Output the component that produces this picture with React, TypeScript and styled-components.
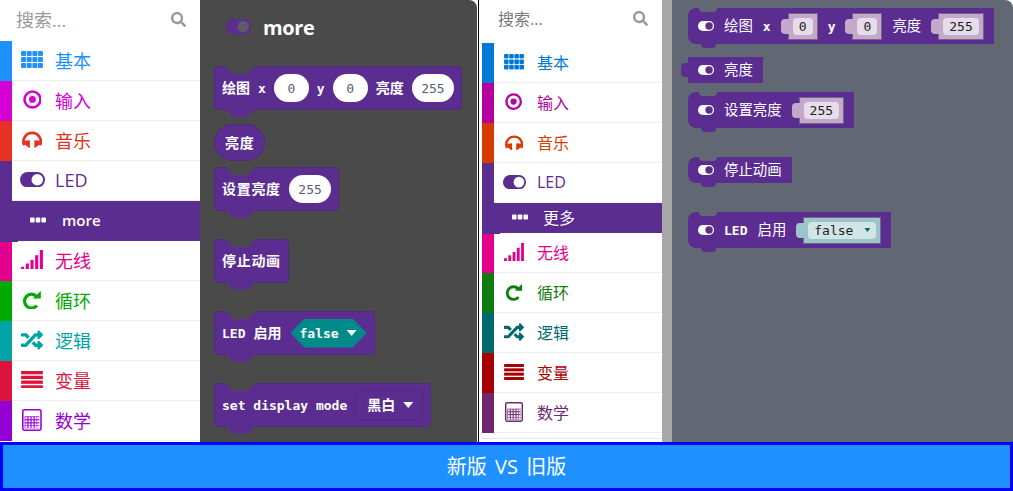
import React from 'react';
import styled, { createGlobalStyle } from 'styled-components';
import { FaRandom, FaSearch } from 'react-icons/fa';

const uiFont = `"Open Sans", "Noto Sans CJK SC", sans-serif`;
const monoFont = `"DejaVu Sans Mono", "Noto Sans CJK SC", monospace`;
const cjkFont = `"Noto Sans CJK SC", sans-serif`;
const purple = '#5c2d91';
const flyoutBg = '#4b4a4b';
const workspaceBg = '#616773';

const GlobalStyle = createGlobalStyle`
	html, body {
		margin: 0;
		padding: 0;
		background: #fff;
		overflow: hidden;
	}
	* {
		box-sizing: border-box;
	}
`;

const Page = styled.div`
	display: grid;
	grid-template-rows: 442px 49px;
	width: 1013px;
	height: 491px;
	overflow: hidden;
	font-family: ${uiFont};
`;

const Compare = styled.div`
	display: flex;
	min-height: 0;
`;

const Divider = styled.div`
	width: 1px;
	margin: 0 3px 0 1px;
	background: #000;
	flex: none;
`;

const Footer = styled.div`
	display: flex;
	align-items: center;
	justify-content: center;
	border: 3px solid #0000ff;
	background: #1e90ff;
	color: #fff;
	font-size: 20px;
	word-spacing: 3px;
	padding-bottom: 2px;
`;

/* toolbox */

const Toolbox = styled.div<{ $old?: boolean }>`
	flex: none;
	width: ${(p) => (p.$old ? 180 : 200)}px;
	background: #fff;
	font-size: ${(p) => (p.$old ? 16 : 18)}px;
`;

const Search = styled.div<{ $old?: boolean }>`
	display: flex;
	align-items: center;
	justify-content: space-between;
	height: ${(p) => (p.$old ? 43 : 41)}px;
	padding: ${(p) => (p.$old ? '0 14px 7px 16px' : '0 14px 3px 16px')};
	color: ${(p) => (p.$old ? '#777' : '#999')};
	svg {
		color: #999;
		margin-top: 1px;
	}
`;

const Row = styled.div<{ $color: string }>`
	display: flex;
	height: 40px;
	background: ${(p) => p.$color};
`;

const RowBody = styled.div<{ $color: string; $old?: boolean }>`
	display: flex;
	align-items: center;
	flex: 1;
	margin-left: 12px;
	padding-bottom: ${(p) => (p.$old ? 1 : 2)}px;
	background: #fff;
	border-bottom: 1px solid #ecf0f1;
	color: ${(p) => p.$color};
`;

const IconSlot = styled.div`
	display: flex;
	align-items: center;
	justify-content: center;
	flex: none;
	width: 40px;
	margin-right: 3px;
`;

const SubRow = styled.div<{ $old?: boolean }>`
	position: relative;
	display: flex;
	align-items: center;
	gap: ${(p) => (p.$old ? 15 : 16)}px;
	height: ${(p) => (p.$old ? 30 : 40)}px;
	padding: 0 0 ${(p) => (p.$old ? 3 : 2)}px 30px;
	background: ${purple};
	color: #fff;
	font-size: ${(p) => (p.$old ? 16 : 15)}px;
	font-weight: ${(p) => (p.$old ? 400 : 600)};
	&::after {
		content: '';
		position: absolute;
		left: 0;
		bottom: -1px;
		width: 18px;
		height: 1px;
		background: ${purple};
	}
`;

const ToolboxEnd = styled.div`
	height: 6px;
	border-bottom: 1px solid #e8e8e8;
`;

/* icons */

const GridIcon = ({ size }: { size: number }) => (
	<svg width={size} height={size * 0.77} viewBox="0 0 22 17" fill="currentColor">
		{[0, 6, 12].map((y) =>
			[0, 5.7, 11.4, 17].map((x) => <rect key={`${x}-${y}`} x={x} y={y} width="5" height="5" rx="1" />),
		)}
	</svg>
);

const TargetIcon = ({ size }: { size: number }) => (
	<svg width={size * 0.86} height={size * 0.86} viewBox="0 0 19 19">
		<circle cx="9.5" cy="9.5" r="8" fill="none" stroke="currentColor" strokeWidth="2.6" />
		<circle cx="9.5" cy="9.5" r="3.4" fill="currentColor" />
	</svg>
);

const HeadphonesIcon = ({ size }: { size: number }) => (
	<svg width={size * 0.92} height={size * 0.84} viewBox="0 0 20 18">
		<path d="M2.2 15 A8.6 8.6 0 1 1 17.8 15" fill="none" stroke="currentColor" strokeWidth="2.6" />
		<path d="M2 10.5 L7.8 10 L7.8 18 L3 14.5 Z M18 10.5 L12.2 10 L12.2 18 L17 14.5 Z" fill="currentColor" />
	</svg>
);

const ToggleIcon = ({ size, pill, knob }: { size: number; pill: string; knob: string }) => (
	<svg width={size} height={size * 0.62} viewBox="0 0 26 16">
		<rect width="26" height="16" rx="8" fill={pill} />
		<circle cx="18" cy="8" r="6" fill={knob} />
	</svg>
);

const SignalIcon = ({ size }: { size: number }) => (
	<svg width={size} height={size * 0.9} viewBox="0 0 21 19" fill="currentColor">
		<rect x="0" y="16" width="3" height="3" />
		<rect x="4.5" y="13" width="3" height="6" />
		<rect x="9" y="9.5" width="3" height="9.5" />
		<rect x="13.5" y="5" width="3" height="14" />
		<rect x="18" y="0" width="3" height="19" />
	</svg>
);

const LoopIcon = ({ size }: { size: number }) => (
	<svg width={size * 0.9} height={size * 0.9} viewBox="0 0 20 20">
		<path d="M14.6 6.4 A7 7 0 1 0 15 15.6" fill="none" stroke="currentColor" strokeWidth="3.2" />
		<polygon points="11,8.6 19,8.6 19,1" fill="currentColor" />
	</svg>
);

const StripesIcon = ({ size }: { size: number }) => (
	<svg width={size} height={size * 0.8} viewBox="0 0 21 17" fill="currentColor">
		{[0, 4.6, 9.2, 13.8].map((y) => (
			<rect key={y} y={y} width="21" height="3.2" />
		))}
	</svg>
);

const CalcIcon = ({ size }: { size: number }) => (
	<svg width={size * 0.9} height={size} viewBox="0 0 19 21" fill="none" stroke="currentColor">
		<rect x="0.75" y="0.75" width="17.5" height="19.5" rx="1.5" strokeWidth="1.5" />
		<rect x="2.5" y="7" width="14" height="11.5" fill="currentColor" stroke="none" />
		{[7.8, 10.8, 13.8, 16.3].map((y) =>
			[3.2, 6.2, 9.2, 12.2, 14.6].map((x) => (
				<rect key={`${x}-${y}`} x={x} y={y} width="1.9" height="1.9" fill="#fff" stroke="none" />
			)),
		)}
	</svg>
);

const DotsIcon = () => (
	<svg width="16" height="6" viewBox="0 0 16 6" fill="#fff">
		<rect x="0" y="0.5" width="4.6" height="5" rx="1" />
		<rect x="5.7" y="0.5" width="4.6" height="5" rx="1" />
		<rect x="11.4" y="0.5" width="4.6" height="5" rx="1" />
	</svg>
);

type Category = {
	label: string;
	newColor: string;
	oldColor: string;
	icon: (size: number) => React.ReactNode;
};

const topCategories: Category[] = [
	{ label: '基本', newColor: '#1e90ff', oldColor: '#0078d7', icon: (s) => <GridIcon size={s} /> },
	{ label: '输入', newColor: '#d400d4', oldColor: '#b4009e', icon: (s) => <TargetIcon size={s} /> },
	{ label: '音乐', newColor: '#e63022', oldColor: '#d83b01', icon: (s) => <HeadphonesIcon size={s} /> },
	{
		label: 'LED',
		newColor: purple,
		oldColor: purple,
		icon: (s) => <ToggleIcon size={s + 3} pill={purple} knob="#fff" />,
	},
];

const bottomCategories: Category[] = [
	{ label: '无线', newColor: '#e3008c', oldColor: '#e3008c', icon: (s) => <SignalIcon size={s} /> },
	{ label: '循环', newColor: '#00aa00', oldColor: '#107c10', icon: (s) => <LoopIcon size={s} /> },
	{ label: '逻辑', newColor: '#00a4a6', oldColor: '#006970', icon: (s) => <FaRandom size={s} /> },
	{ label: '变量', newColor: '#dc143c', oldColor: '#a80000', icon: (s) => <StripesIcon size={s} /> },
	{ label: '数学', newColor: '#9400d3', oldColor: '#712672', icon: (s) => <CalcIcon size={s} /> },
];

const CategoryRow: React.FC<{ category: Category; old?: boolean }> = ({ category, old }) => {
	const color = old ? category.oldColor : category.newColor;
	return (
		<Row $color={color}>
			<RowBody $color={color} $old={old}>
				<IconSlot>{category.icon(old ? 20 : 22)}</IconSlot>
				{category.label}
			</RowBody>
		</Row>
	);
};

const ToolboxPanel: React.FC<{ old?: boolean; subLabel: string }> = ({ old, subLabel }) => (
	<Toolbox $old={old}>
		<Search $old={old}>
			<span>搜索...</span>
			<FaSearch size={15} />
		</Search>
		{topCategories.map((c) => (
			<CategoryRow key={c.label} category={c} old={old} />
		))}
		<SubRow $old={old}>
			<DotsIcon />
			{subLabel}
		</SubRow>
		{bottomCategories.map((c) => (
			<CategoryRow key={c.label} category={c} old={old} />
		))}
		{old && <ToolboxEnd />}
	</Toolbox>
);

/* new style blocks */

const Flyout = styled.div`
	flex: none;
	display: flex;
	flex-direction: column;
	align-items: flex-start;
	width: 277px;
	padding-left: 14px;
	background: ${flyoutBg};
	border-top-right-radius: 8px;
	overflow: hidden;
`;

const FlyoutHeader = styled.div`
	display: flex;
	align-items: center;
	gap: 12px;
	height: 54px;
	margin: 0 0 12px 12px;
	color: #fff;
	font-size: 20px;
	font-weight: 700;
	letter-spacing: -0.4px;
`;

const CjkLabel = styled.span<{ $spaced?: boolean }>`
	font-family: ${cjkFont};
	font-size: 14px;
	font-weight: 700;
	letter-spacing: ${(p) => (p.$spaced ? 0.7 : 0)}px;
	margin-bottom: 2px;
	white-space: nowrap;
`;

const MonoLabel = styled.span`
	font-family: ${monoFont};
	font-size: 13px;
	font-weight: 700;
	white-space: pre;
`;

const NewBlock = styled.div<{ $top: number }>`
	position: relative;
	display: inline-flex;
	align-items: center;
	gap: 8px;
	height: 44px;
	margin-top: ${(p) => p.$top}px;
	padding: 0 7px;
	background: ${purple};
	border: 1px solid #4e2a78;
	border-radius: 4px;
	color: #fff;
	${MonoLabel} {
		margin-top: 1px;
	}
	&::before {
		content: '';
		position: absolute;
		top: -1px;
		left: 10px;
		width: 31px;
		height: 8px;
		background: ${flyoutBg};
		clip-path: polygon(0 0, 100% 0, 72% 100%, 28% 100%);
	}
	&::after {
		content: '';
		position: absolute;
		bottom: -8px;
		left: 10px;
		width: 31px;
		height: 8px;
		background: ${purple};
		clip-path: polygon(0 0, 100% 0, 72% 100%, 28% 100%);
	}
`;

const OvalBlock = styled.div<{ $top: number }>`
	display: inline-flex;
	align-items: center;
	height: 37px;
	margin-top: ${(p) => p.$top}px;
	padding: 0 10px;
	background: ${purple};
	border: 1px solid #4e2a78;
	border-radius: 19px;
	color: #fff;
`;

const NumberPill = styled.span`
	display: flex;
	align-items: center;
	justify-content: center;
	height: 28px;
	padding: 0 9.5px;
	min-width: 35px;
	border-radius: 14px;
	background: #fff;
	color: #575e75;
	font-family: ${monoFont};
	font-size: 13px;
`;

const Arrow = styled.span<{ $w: number; $h: number; $color?: string }>`
	display: block;
	flex: none;
	width: ${(p) => p.$w}px;
	height: ${(p) => p.$h}px;
	background: ${(p) => p.$color ?? 'currentColor'};
	clip-path: polygon(0 0, 100% 0, 50% 100%);
`;

const BoolField = styled.span`
	display: flex;
	align-items: center;
	gap: 8px;
	height: 29px;
	margin-left: 1px;
	padding: 0 10px 0 9px;
	background: #008b8b;
	clip-path: polygon(0 50%, 14px 0, calc(100% - 14px) 0, 100% 50%, calc(100% - 14px) 100%, 14px 100%);
`;

const DropField = styled.span`
	display: flex;
	align-items: center;
	gap: 8px;
	height: 30px;
	padding: 0 9px 0 11px;
	background: ${purple};
	border: 1px solid #4e2a78;
	border-radius: 4px;
`;

/* old style blocks */

const Workspace = styled.div`
	flex: 1;
	display: flex;
	flex-direction: column;
	align-items: flex-start;
	padding: 8px 0 0 16px;
	background: ${workspaceBg};
	border-left: 10px solid #a8a8a8;
	border-top-right-radius: 8px;
	overflow: hidden;
`;

const OldBlock = styled.div<{ $top: number; $tall?: boolean; $output?: boolean }>`
	position: relative;
	display: inline-flex;
	align-items: center;
	gap: 10px;
	height: ${(p) => (p.$tall ? 36 : 26)}px;
	margin-top: ${(p) => p.$top}px;
	padding: 0 10px;
	background: ${purple};
	color: #fff;
	border-radius: ${(p) => (p.$output ? '0' : '8px 0 0 8px')};
	&::before {
		content: '';
		position: absolute;
		${(p) =>
			p.$output
				? `left: -7px; top: 6px; width: 7px; height: 14px; background: ${purple}; border-radius: 4px 0 0 4px;`
				: `top: 0; left: 11px; width: 18px; height: 4px; background: ${workspaceBg}; border-radius: 0 0 7px 7px;`}
	}
	&::after {
		content: '';
		display: ${(p) => (p.$output ? 'none' : 'block')};
		position: absolute;
		bottom: -4px;
		left: 13px;
		width: 15px;
		height: 4px;
		background: ${purple};
		border-radius: 0 0 6px 6px;
	}
`;

const OldLabel = styled.span`
	font-family: ${cjkFont};
	font-size: 14.4px;
	margin-bottom: 3px;
	white-space: nowrap;
`;

const OldSocket = styled.span<{ $bg?: string }>`
	position: relative;
	display: flex;
	align-items: center;
	height: 27px;
	margin-left: 7px;
	padding: 0 4px;
	background: ${(p) => p.$bg ?? '#c5a9cc'};
	border: 1px solid #6c6a80;
	&::before {
		content: '';
		position: absolute;
		left: -8px;
		top: 5px;
		width: 8px;
		height: 15px;
		background: ${(p) => p.$bg ?? '#c5a9cc'};
		border-radius: 4px 0 0 4px;
	}
`;

const OldField = styled.span<{ $bg?: string }>`
	display: flex;
	align-items: center;
	justify-content: center;
	gap: 11px;
	height: 17px;
	min-width: 20px;
	padding: 0 6px;
	border-radius: 4px;
	background: ${(p) => p.$bg ?? '#e6dcea'};
	color: #222;
	font-family: ${monoFont};
	font-size: 13px;
`;

const WhiteToggle = () => <ToggleIcon size={16} pill="#fff" knob={purple} />;

const App: React.FC = () => (
	<>
		<GlobalStyle />
		<Page>
			<Compare>
				<ToolboxPanel subLabel="more" />
				<Flyout>
					<FlyoutHeader>
						<ToggleIcon size={25} pill={purple} knob="#5f5a68" />
						more
					</FlyoutHeader>
					<NewBlock $top={0}>
						<CjkLabel>绘图</CjkLabel>
						<MonoLabel>x</MonoLabel>
						<NumberPill>0</NumberPill>
						<MonoLabel>y</MonoLabel>
						<NumberPill>0</NumberPill>
						<CjkLabel>亮度</CjkLabel>
						<NumberPill>255</NumberPill>
					</NewBlock>
					<OvalBlock $top={14}>
						<CjkLabel $spaced>亮度</CjkLabel>
					</OvalBlock>
					<NewBlock $top={6}>
						<CjkLabel $spaced>设置亮度</CjkLabel>
						<NumberPill>255</NumberPill>
					</NewBlock>
					<NewBlock $top={28}>
						<CjkLabel $spaced>停止动画</CjkLabel>
					</NewBlock>
					<NewBlock $top={28}>
						<MonoLabel>LED</MonoLabel>
						<CjkLabel>启用</CjkLabel>
						<BoolField>
							<MonoLabel>false</MonoLabel>
							<Arrow $w={10} $h={6} />
						</BoolField>
					</NewBlock>
					<NewBlock $top={28}>
						<MonoLabel>set display mode</MonoLabel>
						<DropField>
							<CjkLabel>黑白</CjkLabel>
							<Arrow $w={10} $h={6} />
						</DropField>
					</NewBlock>
				</Flyout>
				<Divider />
				<ToolboxPanel old subLabel="更多" />
				<Workspace>
					<OldBlock $top={0} $tall>
						<WhiteToggle />
						<OldLabel>绘图</OldLabel>
						<MonoLabel>x</MonoLabel>
						<OldSocket>
							<OldField>0</OldField>
						</OldSocket>
						<MonoLabel>y</MonoLabel>
						<OldSocket>
							<OldField>0</OldField>
						</OldSocket>
						<OldLabel>亮度</OldLabel>
						<OldSocket>
							<OldField>255</OldField>
						</OldSocket>
					</OldBlock>
					<OldBlock $top={13} $output>
						<WhiteToggle />
						<OldLabel>亮度</OldLabel>
					</OldBlock>
					<OldBlock $top={9} $tall>
						<WhiteToggle />
						<OldLabel>设置亮度</OldLabel>
						<OldSocket>
							<OldField>255</OldField>
						</OldSocket>
					</OldBlock>
					<OldBlock $top={29}>
						<WhiteToggle />
						<OldLabel>停止动画</OldLabel>
					</OldBlock>
					<OldBlock $top={29} $tall>
						<WhiteToggle />
						<MonoLabel>LED</MonoLabel>
						<OldLabel>启用</OldLabel>
						<OldSocket $bg="#9dc5c9">
							<OldField $bg="#d2e5e5">
								false
								<Arrow $w={6} $h={4} $color="#006970" />
							</OldField>
						</OldSocket>
					</OldBlock>
				</Workspace>
			</Compare>
			<Footer>新版 VS 旧版</Footer>
		</Page>
	</>
);

export default App;
